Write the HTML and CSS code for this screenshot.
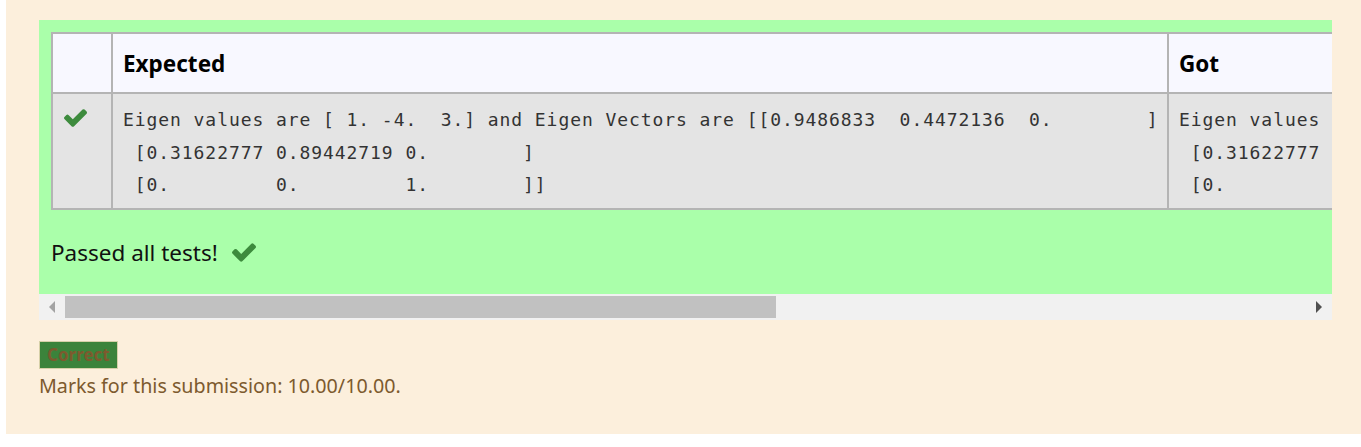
FILE: index.html
```html
<!DOCTYPE html>
<html>
<head>
<meta charset="utf-8">
<link rel="stylesheet" href="styles.css">
</head>
<body>
<div class="outer">
  <div class="results">
    <div class="clip">
      <table class="tests">
        <colgroup><col class="c1"><col class="c2"><col class="c3"></colgroup>
        <thead>
          <tr><th></th><th>Expected</th><th>Got</th></tr>
        </thead>
        <tbody>
          <tr>
            <td class="mark"><svg class="check" viewBox="121 334 1550 1188"><path d="M1671 566q0 40-28 68l-724 724-136 136q-28 28-68 28t-68-28l-136-136-362-362q-28-28-28-68t28-68l136-136q28-28 68-28t68 28l294 295 656-657q28-28 68-28t68 28l136 136q28 28 28 68z"/></svg></td>
            <td><pre>Eigen values are [ 1. -4.  3.] and Eigen Vectors are [[0.9486833  0.4472136  0.        ]
 [0.31622777 0.89442719 0.        ]
 [0.         0.         1.        ]]</pre></td>
            <td><pre>Eigen values
 [0.31622777
 [0.</pre></td>
          </tr>
        </tbody>
      </table>
      <p class="passed">Passed all tests! <svg class="check big" viewBox="121 334 1550 1188"><path d="M1671 566q0 40-28 68l-724 724-136 136q-28 28-68 28t-68-28l-136-136-362-362q-28-28-28-68t28-68l136-136q28-28 68-28t68 28l294 295 656-657q28-28 68-28t68 28l136 136q28 28 28 68z"/></svg></p>
    </div>
    <div class="scrollbar">
      <div class="sb-btn"><span class="tri-left"></span></div>
      <div class="sb-thumb"></div>
      <div class="sb-rest"></div>
      <div class="sb-btn"><span class="tri-right"></span></div>
    </div>
  </div>
  <div class="outcome">
    <span class="badge">Correct</span>
    <div class="marks">Marks for this submission: 10.00/10.00.</div>
  </div>
</div>
</body>
</html>
```
FILE: styles.css
```css
html, body {
  margin: 0;
  padding: 0;
  background: #ffffff;
}
body {
  font-family: "Noto Sans", "Open Sans", sans-serif;
}
.outer {
  margin-left: 6px;
  height: 414px;
  padding: 20px 0 0 33px;
  background: #fcefdc;
}
.results {
  width: 1293px;
}
.clip {
  background: #aaffaa;
  overflow: hidden;
  padding: 12px 0 0 12px;
  height: 274px;
  box-sizing: border-box;
}
.tests {
  border-collapse: collapse;
  table-layout: fixed;
  width: 1400px;
  border: 2px solid #b4b4b4;
}
.c1 { width: 60px; }
.c2 { width: 1056px; }
.c3 { width: 284px; }
.tests th, .tests td {
  border: 2px solid #b4b4b4;
  text-align: left;
  vertical-align: top;
}
.tests th {
  background: #f8f8ff;
  height: 58px;
  padding: 0 10px;
  vertical-align: middle;
  font-size: 22.5px;
  font-weight: 700;
  color: #000;
}
.tests td {
  background: #e4e4e4;
  padding: 10px 10px 6px 10px;
}
.tests td.mark {
  padding: 15px 0 0 11px;
}
.check {
  width: 23px;
  height: 18px;
  fill: #3d8b3d;
  display: block;
}
.tests pre {
  margin: 0;
  font-family: "DejaVu Sans Mono", monospace;
  font-size: 18px;
  letter-spacing: 0.93px;
  line-height: 32.5px;
  color: #333;
  white-space: pre;
}
.passed {
  margin: 0;
  padding-top: 28px;
  font-size: 22.5px;
  color: #111;
  display: flex;
  align-items: center;
  gap: 14px;
  line-height: 30px;
}
.check.big {
  width: 24px;
  height: 19px;
}
.scrollbar {
  display: flex;
  height: 26px;
  background: #f1f1f1;
}
.sb-btn {
  width: 26px;
  display: flex;
  align-items: center;
  justify-content: center;
}
.tri-left {
  width: 0;
  height: 0;
  border-top: 6px solid transparent;
  border-bottom: 6px solid transparent;
  border-right: 6px solid #a3a3a3;
}
.tri-right {
  width: 0;
  height: 0;
  border-top: 6px solid transparent;
  border-bottom: 6px solid transparent;
  border-left: 6px solid #505050;
}
.sb-thumb {
  width: 711px;
  margin: 2px 0;
  background: #c1c1c1;
}
.sb-rest {
  flex: 1;
}
.outcome {
  padding-top: 21px;
}
.badge {
  display: inline-block;
  background: #3b833b;
  border: 1px solid #d6d0a8;
  color: #7d5a2e;
  font-weight: 700;
  font-size: 17px;
  line-height: 26px;
  padding: 0 7px;
}
.marks {
  color: #7d5a2e;
  font-size: 19.7px;
  margin-top: 3px;
  line-height: 28px;
}
```
